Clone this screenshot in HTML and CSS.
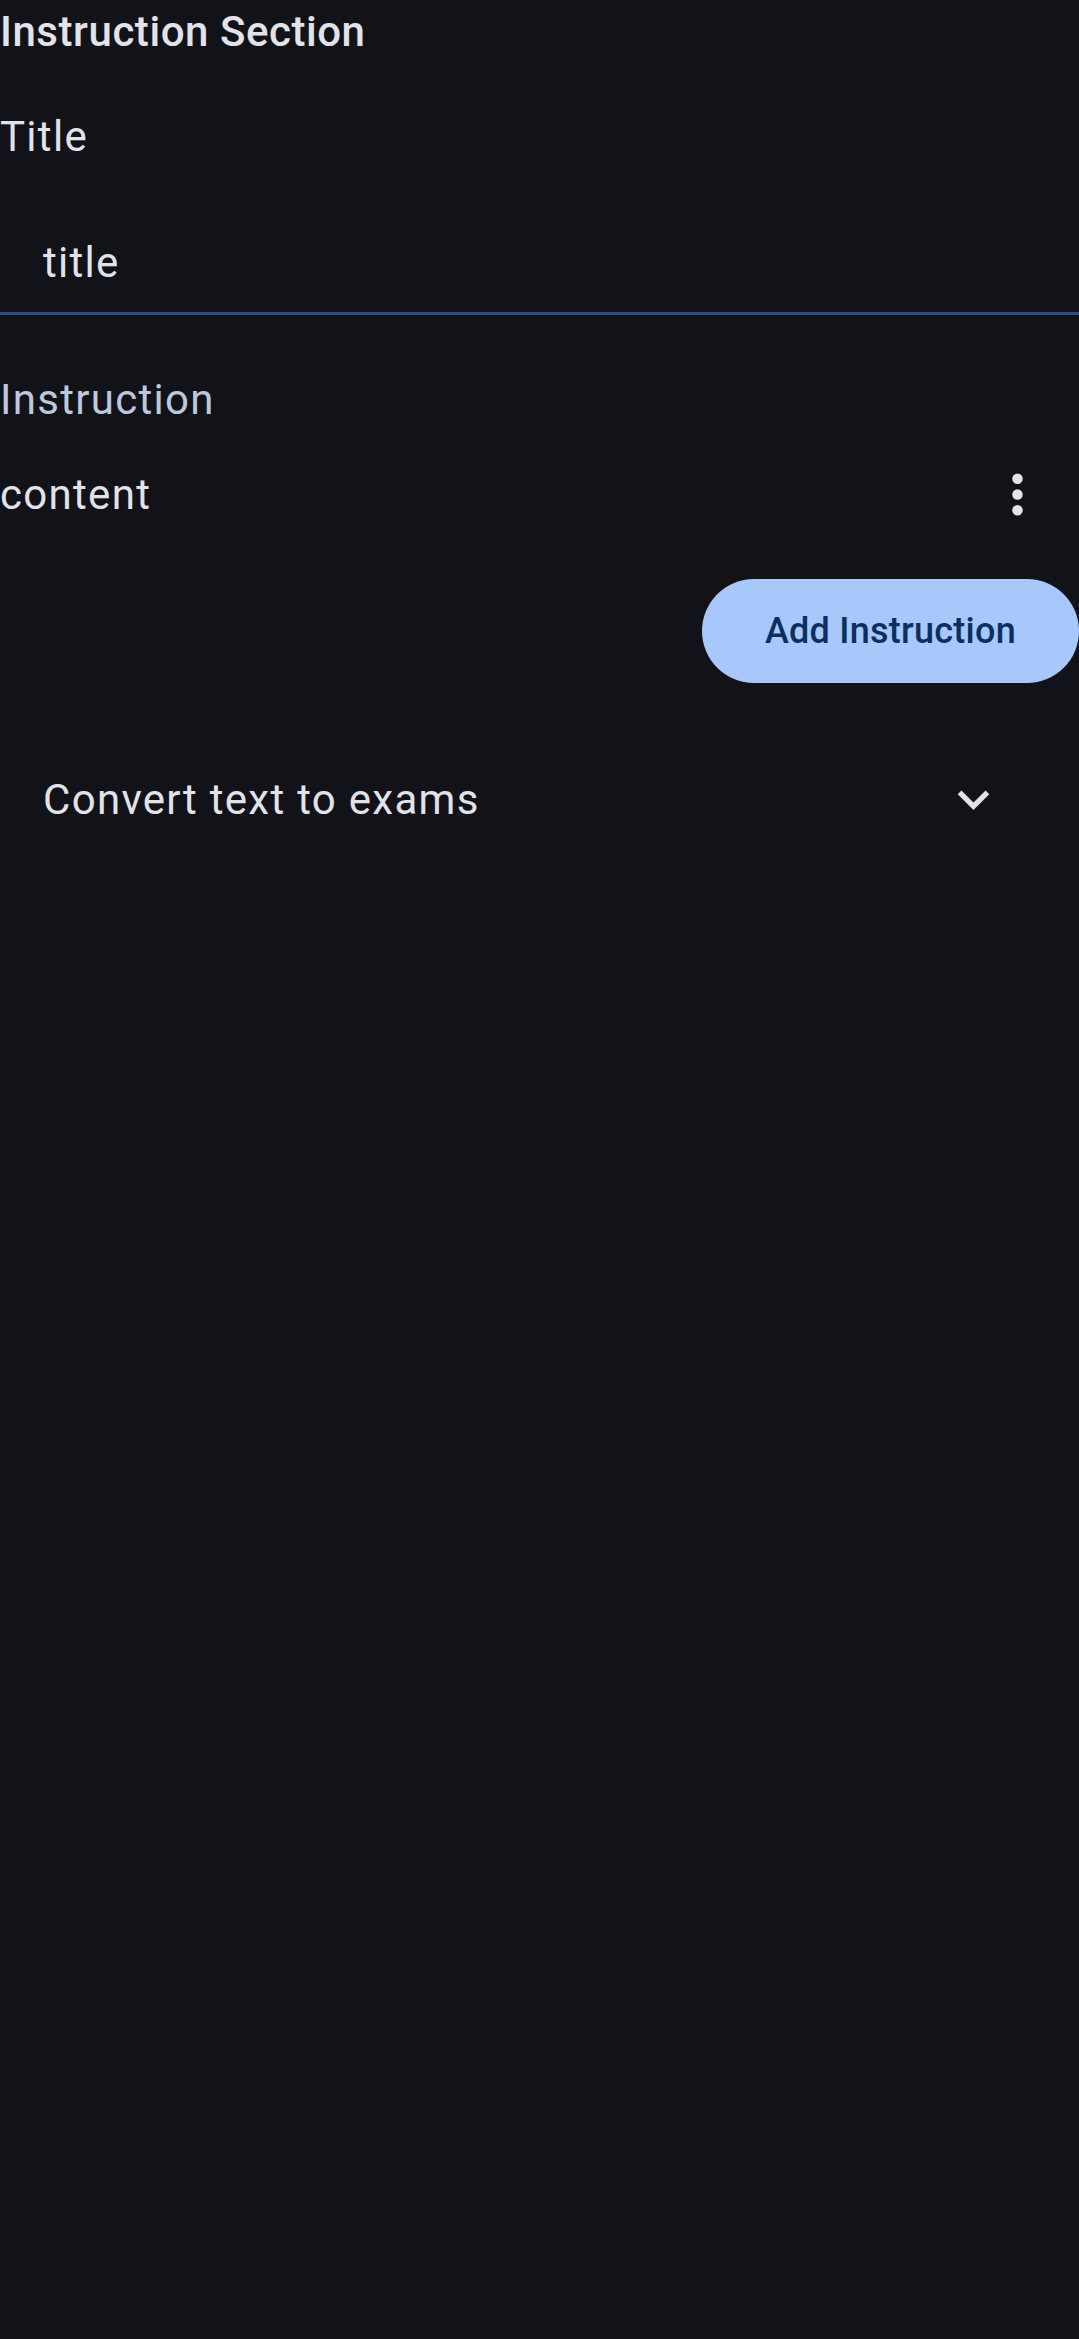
FILE: index.html
```html
<!DOCTYPE html>
<html lang="en">
<head>
<meta charset="utf-8">
<title>Instruction Section</title>
<link rel="stylesheet" href="styles.css">
</head>
<body>
<main class="page">
  <h2 class="section-title">Instruction Section</h2>
  <div class="field-label">Title</div>
  <div class="text-field"><span class="text-field__value">title</span></div>
  <div class="field-label field-label--muted">Instruction</div>
  <div class="instruction-row">
    <span class="instruction-row__text">content</span>
    <button class="icon-btn" aria-label="More options">
      <svg viewBox="0 0 24 24" width="63" height="63"><circle cx="12" cy="6" r="2"/><circle cx="12" cy="12" r="2"/><circle cx="12" cy="18" r="2"/></svg>
    </button>
  </div>
  <div class="actions">
    <button class="btn-primary">Add Instruction</button>
  </div>
  <div class="dropdown">
    <span class="dropdown__value">Convert text to exams</span>
    <svg class="dropdown__icon" viewBox="0 0 24 24" width="63" height="63"><path d="M16.59 8.59L12 13.17 7.41 8.59 6 10l6 6 6-6z"/></svg>
  </div>
</main>
</body>
</html>
```
FILE: styles.css
```css
html, body {
  margin: 0;
  padding: 0;
  background: #121318;
}
body {
  font-family: Roboto, "Noto Sans", "Liberation Sans", sans-serif;
  color: #e2e2e9;
  min-height: 2339px;
}
.page {
  display: flex;
  flex-direction: column;
  width: 1079px;
}
.section-title {
  margin: 0;
  font-size: 42px;
  line-height: 63px;
  font-weight: 500;
  letter-spacing: 0.55px;
}
.field-label {
  margin-top: 42px;
  font-size: 42px;
  line-height: 63px;
  letter-spacing: 1.3px;
}
.field-label--muted {
  margin-top: 53px;
  color: #bec8dd;
}
.text-field {
  height: 144px;
  border-bottom: 3px solid #2c4e84;
  box-sizing: content-box;
}
.text-field__value {
  display: block;
  padding: 63px 0 0 43px;
  font-size: 42px;
  line-height: 63px;
  letter-spacing: 1.3px;
}
.instruction-row {
  display: flex;
  align-items: center;
  justify-content: space-between;
  height: 126px;
}
.instruction-row__text {
  font-size: 42px;
  line-height: 63px;
  letter-spacing: 1.3px;
}
.icon-btn {
  width: 126px;
  height: 126px;
  padding: 0;
  margin-right: -1px;
  border: 0;
  background: transparent;
  display: flex;
  align-items: center;
  justify-content: center;
  fill: #e2e2e9;
}
.actions {
  display: flex;
  justify-content: flex-end;
  margin-top: 22px;
}
.btn-primary {
  height: 104px;
  padding: 0 63px;
  border: 0;
  border-radius: 52px;
  background: #a8c7fa;
  color: #0a3061;
  font-family: Roboto, "Noto Sans", "Liberation Sans", sans-serif;
  font-size: 36px;
  font-weight: 500;
  letter-spacing: 0.25px;
}
.dropdown {
  display: flex;
  align-items: center;
  justify-content: space-between;
  height: 147px;
  margin-top: 43px;
  padding: 0 74px 0 43px;
}
.dropdown__value {
  font-size: 42px;
  line-height: 63px;
  letter-spacing: 1.3px;
}
.dropdown__icon {
  fill: #e2e2e9;
}
```
